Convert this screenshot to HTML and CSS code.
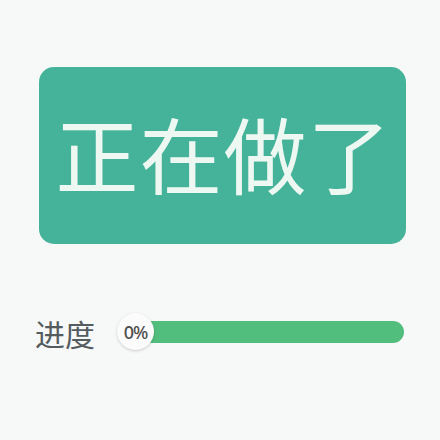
FILE: index.html
```html
<!DOCTYPE html>
<html lang="zh">
<head>
<meta charset="utf-8">
<link rel="stylesheet" href="styles.css">
</head>
<body>
<div class="page">
  <div class="card"><span class="card-text">正在做了</span></div>
  <div class="progress-row">
    <span class="label">进度</span>
    <div class="track">
      <div class="knob">0%</div>
    </div>
  </div>
</div>
</body>
</html>
```
FILE: styles.css
```css
html, body {
  margin: 0;
  padding: 0;
  background: #f7f8f8;
  font-family: "Noto Sans CJK SC", "Noto Sans", sans-serif;
}
.page {
  width: 440px;
  height: 440px;
  padding: 67px 0 0 39px;
  box-sizing: border-box;
}
.card {
  width: 367px;
  height: 177px;
  border-radius: 15px;
  background: #45b39a;
  display: flex;
  align-items: center;
  justify-content: center;
}
.card-text {
  color: #eef8f2;
  font-size: 83px;
  line-height: 1;
  letter-spacing: 1px;
  margin-top: -6px;
  margin-left: 2px;
}
.progress-row {
  display: flex;
  align-items: center;
  margin-top: 66px;
  margin-left: -4px;
  height: 44px;
}
.label {
  font-size: 30px;
  line-height: 1;
  color: #545c5f;
  margin-top: 2px;
  width: 83px;
}
.track {
  position: relative;
  width: 286px;
  height: 22px;
  border-radius: 11px;
  background: #52be7e;
}
.knob {
  position: absolute;
  left: -1px;
  top: -8px;
  width: 37px;
  height: 37px;
  border-radius: 50%;
  background: #fbfbfb;
  box-shadow: 0 1px 3px rgba(0,0,0,0.18);
  display: flex;
  align-items: center;
  justify-content: center;
  font-family: "Noto Sans", "Open Sans", sans-serif;
  font-size: 18px;
  font-weight: 500;
  color: #505050;
  letter-spacing: -1px;
}
```
